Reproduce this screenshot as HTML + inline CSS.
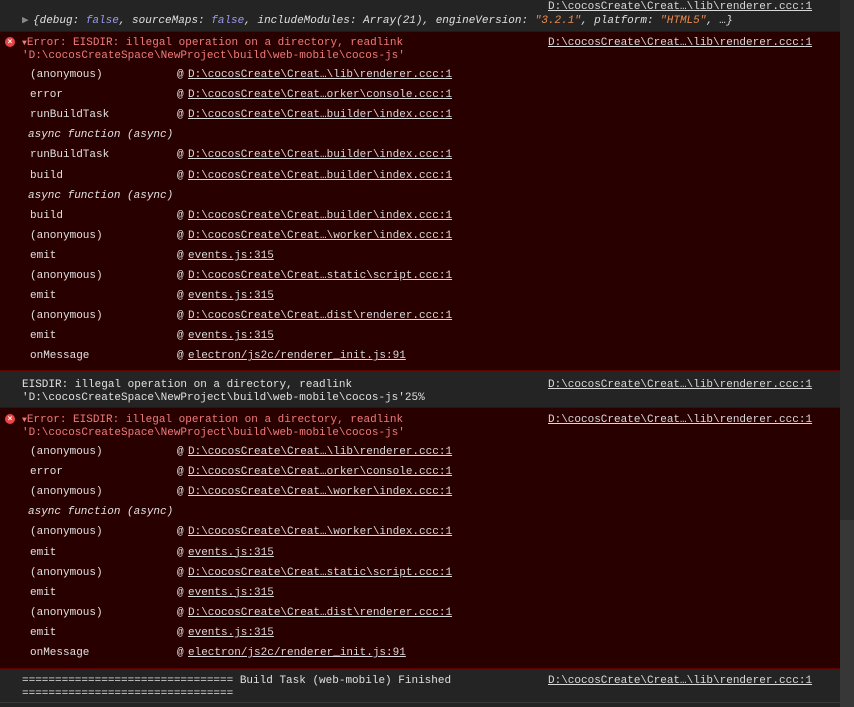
<!DOCTYPE html><html><head><style>
body{margin:0;width:854px;height:707px;background:#242424;overflow:hidden;position:relative;font-family:"Liberation Mono",monospace;font-size:11px;color:#e0e0e0}
.t{position:absolute;white-space:pre;line-height:13px}
.err{position:absolute;left:0;width:840px;background:#290000;border-top:1px solid #5c0000;border-bottom:1px solid #5c0000}
.gray{position:absolute;left:0;width:840px;background:#242424}
a{color:#d8d8d8;text-decoration:underline}
.r{color:#f07a7a}
.i{font-style:italic}
.k{color:#9a9af0}
.s{color:#f08a4b}
.ic{position:absolute;width:10px;height:10px;border-radius:50%;background:#e84545;color:#fff;font-size:8px;line-height:10px;text-align:center;font-family:"Liberation Sans",sans-serif;font-weight:bold}
.sb{position:absolute;left:840px;top:0;width:14px;height:707px;background:#2b2b2b}
.th{position:absolute;left:840px;top:520px;width:14px;height:187px;background:#373737}
</style></head><body>
<div class="sb"></div><div class="th"></div>
<div class="t" style="left:548px;top:1px"><a>D:\cocosCreate\Creat…\lib\renderer.ccc:1</a></div>
<div class="t i" style="left:22px;top:15px;color:#888">▶</div>
<div class="t i" style="left:33px;top:15px">{debug: <span class="k">false</span>, sourceMaps: <span class="k">false</span>, includeModules: Array(21), engineVersion: <span class="s">"3.2.1"</span>, platform: <span class="s">"HTML5"</span>, …}</div>

<div class="err" style="top:31px;height:338px"></div>
<div class="ic" style="left:5px;top:37px">×</div>
<div class="t r" style="left:22px;top:37px"><span style="font-size:8px">▼</span>Error: EISDIR: illegal operation on a directory, readlink
'D:\cocosCreateSpace\NewProject\build\web-mobile\cocos-js'</div>
<div class="t" style="left:548px;top:37px"><a>D:\cocosCreate\Creat…\lib\renderer.ccc:1</a></div>

<div class="gray" style="top:371px;height:36px"></div>
<div class="t" style="left:22px;top:379px">EISDIR: illegal operation on a directory, readlink
'D:\cocosCreateSpace\NewProject\build\web-mobile\cocos-js'25%</div>
<div class="t" style="left:548px;top:379px"><a>D:\cocosCreate\Creat…\lib\renderer.ccc:1</a></div>

<div class="err" style="top:407px;height:260px"></div>
<div class="ic" style="left:5px;top:414px">×</div>
<div class="t r" style="left:22px;top:414px"><span style="font-size:8px">▼</span>Error: EISDIR: illegal operation on a directory, readlink
'D:\cocosCreateSpace\NewProject\build\web-mobile\cocos-js'</div>
<div class="t" style="left:548px;top:414px"><a>D:\cocosCreate\Creat…\lib\renderer.ccc:1</a></div>

<div class="gray" style="top:669px;height:33px;border-bottom:1px solid #3a3a3a"></div>
<div class="t" style="left:22px;top:675px">================================ Build Task (web-mobile) Finished
================================</div>
<div class="t" style="left:548px;top:675px"><a>D:\cocosCreate\Creat…\lib\renderer.ccc:1</a></div>

<div id="s1"></div>
<script>
function rows(y0,list){var h='';list.forEach(function(r,i){var y=y0+i*20.1;
if(r[0]==='A'){h+='<div class="t i" style="left:28px;top:'+y+'px">async function (async)</div>';}
else{h+='<div class="t" style="left:30px;top:'+y+'px">'+r[0]+'</div><div class="t" style="left:177px;top:'+y+'px">@</div><div class="t" style="left:188px;top:'+y+'px"><a>'+r[1]+'</a></div>';}});return h;}
var L='D:\\cocosCreate\\Creat…\\lib\\renderer.ccc:1',C='D:\\cocosCreate\\Creat…orker\\console.ccc:1',B='D:\\cocosCreate\\Creat…builder\\index.ccc:1',W='D:\\cocosCreate\\Creat…\\worker\\index.ccc:1',E='events.js:315',S='D:\\cocosCreate\\Creat…static\\script.ccc:1',D='D:\\cocosCreate\\Creat…dist\\renderer.ccc:1',R='electron/js2c/renderer_init.js:91';
document.getElementById('s1').innerHTML=rows(69,[['(anonymous)',L],['error',C],['runBuildTask',B],['A'],['runBuildTask',B],['build',B],['A'],['build',B],['(anonymous)',W],['emit',E],['(anonymous)',S],['emit',E],['(anonymous)',D],['emit',E],['onMessage',R]])+rows(446,[['(anonymous)',L],['error',C],['(anonymous)',W],['A'],['(anonymous)',W],['emit',E],['(anonymous)',S],['emit',E],['(anonymous)',D],['emit',E],['onMessage',R]]);
</script>
</body></html>
